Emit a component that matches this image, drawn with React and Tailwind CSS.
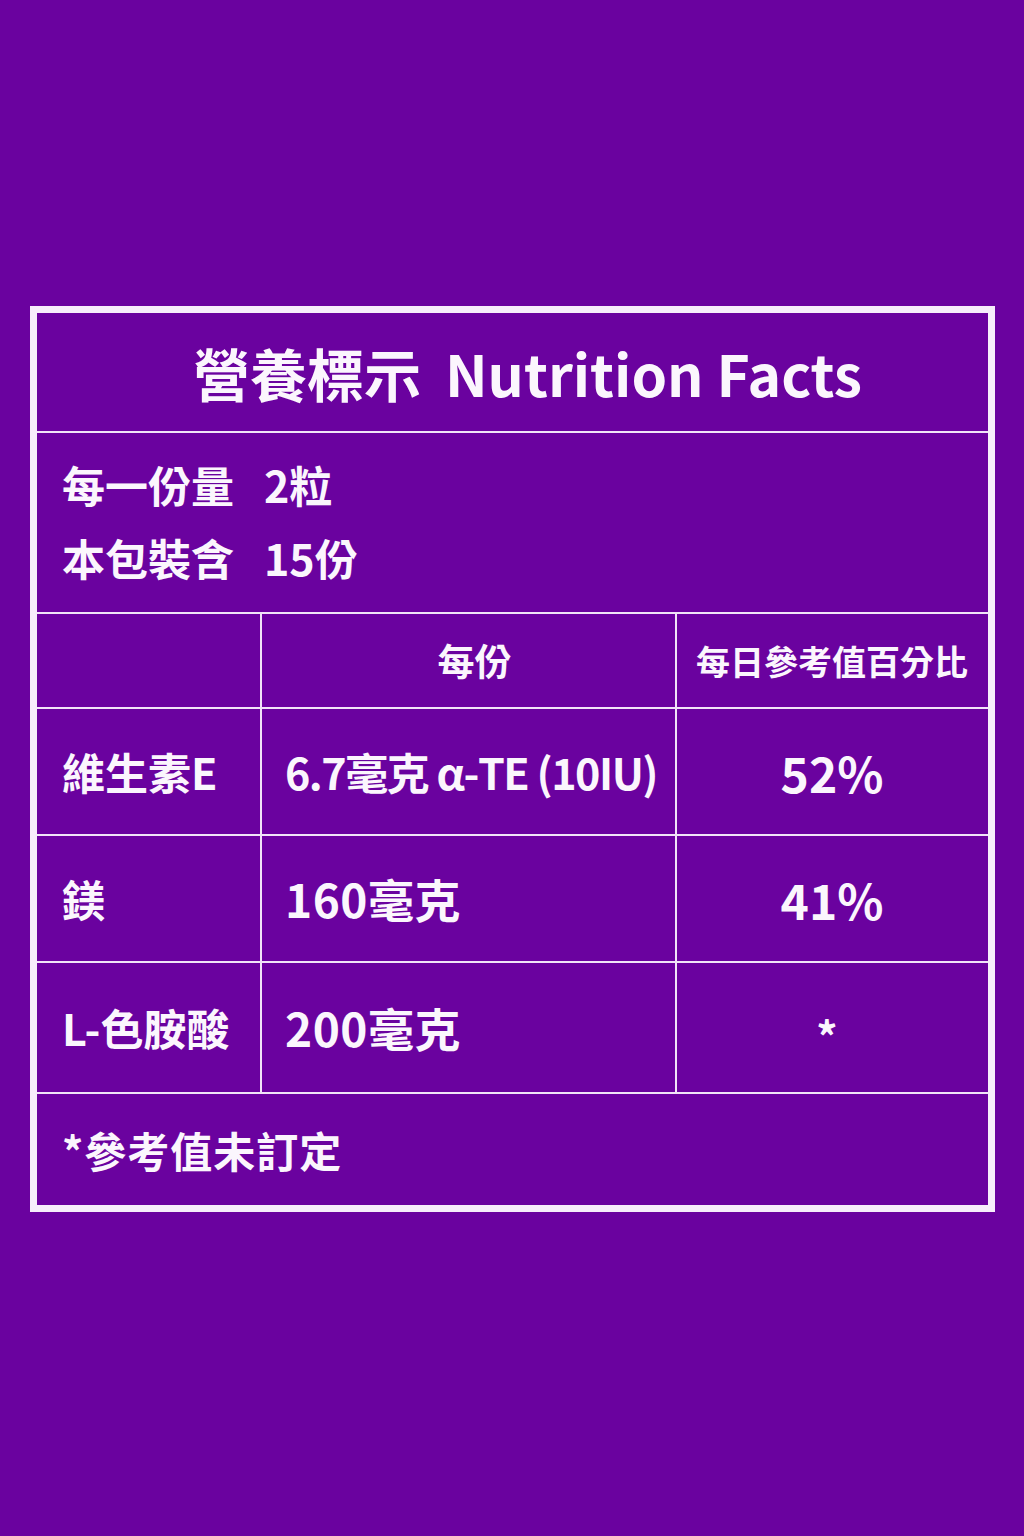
import React from "react";

const font = {
  fontFamily: '"Noto Sans CJK TC", "Noto Sans", sans-serif',
};

const rows = [
  { name: "維生素E", amount: "6.7毫克 α-TE (10IU)", dv: "52%", h: "h-[127px]", small: true },
  { name: "鎂", amount: "160毫克", dv: "41%", h: "h-[127px]" },
  { name: "L-色胺酸", amount: "200毫克", dv: "*", h: "h-[131px]" },
];

export default function App() {
  return (
    <div
      className="w-[1024px] h-[1536px] bg-[#6a029f] pt-[306px] pl-[30px] text-[#fbf6fd] font-bold"
      style={font}
    >
      <div className="w-[965px] border-[7px] border-[#f7eefb]">
        {/* title */}
        <div className="h-[120px] border-b-2 border-[#f1e4f8] flex items-center justify-center gap-[24px] pl-[30px] text-[57px] leading-none">
          <span>營養標示</span>
          <span>Nutrition Facts</span>
        </div>

        {/* serving info */}
        <div className="h-[181px] border-b-2 border-[#f1e4f8] flex flex-col justify-center pl-[25px] pb-[4px] text-[43px]">
          <div className="flex items-center h-[73px]">
            <span className="w-[202px]">每一份量</span>
            <span>2粒</span>
          </div>
          <div className="flex items-center h-[73px]">
            <span className="w-[202px]">本包裝含</span>
            <span>15份</span>
          </div>
        </div>

        {/* header row */}
        <div className="grid grid-cols-[225px_415px_310px] h-[95px] border-b-2 border-[#f1e4f8]">
          <div className="border-r-2 border-[#f1e4f8]" />
          <div className="border-r-2 border-[#f1e4f8] flex items-center justify-center pl-[12px] text-[37px]">
            每份
          </div>
          <div className="flex items-center justify-center text-[34px]">每日參考值百分比</div>
        </div>

        {/* nutrient rows */}
        {rows.map((r) => (
          <div
            key={r.name}
            className={`grid grid-cols-[225px_415px_310px] ${r.h} border-b-2 border-[#f1e4f8]`}
          >
            <div className="border-r-2 border-[#f1e4f8] flex items-center pl-[25px] text-[43px]">
              {r.name}
            </div>
            <div
              className={`border-r-2 border-[#f1e4f8] flex items-center pl-[23px] ${
                r.small ? "text-[43px] tracking-[-1.5px]" : "text-[46px] tracking-[0.5px]"
              }`}
            >
              {r.amount}
            </div>
            <div
              className={`flex items-center justify-center ${
                r.dv === "*" ? "text-[42px] pt-[14px] pr-[10px]" : "text-[48px]"
              }`}
            >
              {r.dv}
            </div>
          </div>
        ))}

        {/* footnote */}
        <div className="h-[111px] flex items-center pl-[25px] text-[42px] tracking-[1px]">
          *參考值未訂定
        </div>
      </div>
    </div>
  );
}
